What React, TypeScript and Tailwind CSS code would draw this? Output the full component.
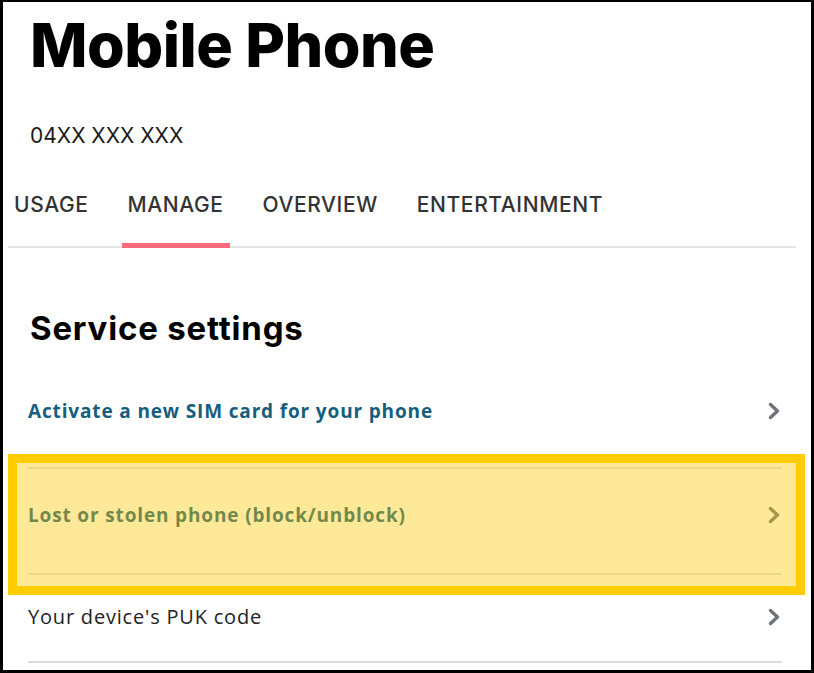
import React from 'react';

const tabs = ['USAGE', 'MANAGE', 'OVERVIEW', 'ENTERTAINMENT'];

function Chevron() {
  return (
    <svg width="16" height="18" viewBox="0 0 16 18" className="shrink-0">
      <path d="M4.5 2.5 L11.5 9 L4.5 15.5" fill="none" stroke="#6f747b" strokeWidth="3.4" strokeLinecap="round" strokeLinejoin="round" />
    </svg>
  );
}

export default function App() {
  return (
    <div className="w-[814px] h-[673px] overflow-hidden bg-white border-black border-t-2 border-l-[3px] border-r-[3px] border-b-[3px]">
      <div className="relative h-full">
        <h1 className="pl-[27px] pt-[3px] text-[61px] leading-[80px] font-extrabold tracking-[-0.5px] text-black" style={{ fontFamily: 'Inter, sans-serif' }}>
          Mobile Phone
        </h1>

        <p className="pl-[27px] mt-[39px] text-[21px] leading-[24px] text-[#1a1a1a]" style={{ fontFamily: 'Inter, sans-serif' }}>
          04XX XXX XXX
        </p>

        {/* tab bar */}
        <div className="ml-[5px] mr-[15px] mt-[46px] border-b-2 border-[#e6e6e6] flex gap-[27px]" style={{ fontFamily: 'Inter, sans-serif' }}>
          {tabs.map(t => (
            <div
              key={t}
              className={`px-[6px] pb-[27px] text-[21px] leading-[22px] font-medium tracking-[0.6px] text-[#333] -mb-[2px] border-b-[5px] ${t === 'MANAGE' ? 'border-[#ff6b7d]' : 'border-transparent'}`}
            >
              {t}
            </div>
          ))}
        </div>

        <h2 className="pl-[27px] mt-[60px] text-[33px] leading-[40px] font-bold tracking-[0.8px] text-black" style={{ fontFamily: 'Inter, sans-serif' }}>
          Service settings
        </h2>

        {/* settings list */}
        <div className="ml-[25px] mr-[29px] mt-[37px]" style={{ fontFamily: '"Open Sans", sans-serif' }}>
          <div className="flex items-center justify-between h-[56px] pb-[4px]">
            <span className="text-[19px] font-bold tracking-[0.85px] text-[#155e7d]">Activate a new SIM card for your phone</span>
            <Chevron />
          </div>
          <div className="mt-[26px] border-t-2 border-[#e3e3e3] flex items-center justify-between h-[106px] pb-[12px]">
            <span className="text-[19px] font-bold tracking-[0.85px] text-[#155e7d]">Lost or stolen phone (block/unblock)</span>
            <Chevron />
          </div>
          <div className="border-t-2 border-[#e3e3e3] border-b-2 border-b-[#d9dde2] flex items-center justify-between h-[90px] pb-[3px]">
            <span className="text-[20px] tracking-[0.8px] text-[#222]">Your device's PUK code</span>
            <Chevron />
          </div>
        </div>

        {/* highlight annotation */}
        <div className="absolute left-[5px] top-[452px] w-[797px] h-[141px] border-[9px] border-[#ffcc00] bg-[#fcc800]/40 pointer-events-none" />
      </div>
    </div>
  );
}
